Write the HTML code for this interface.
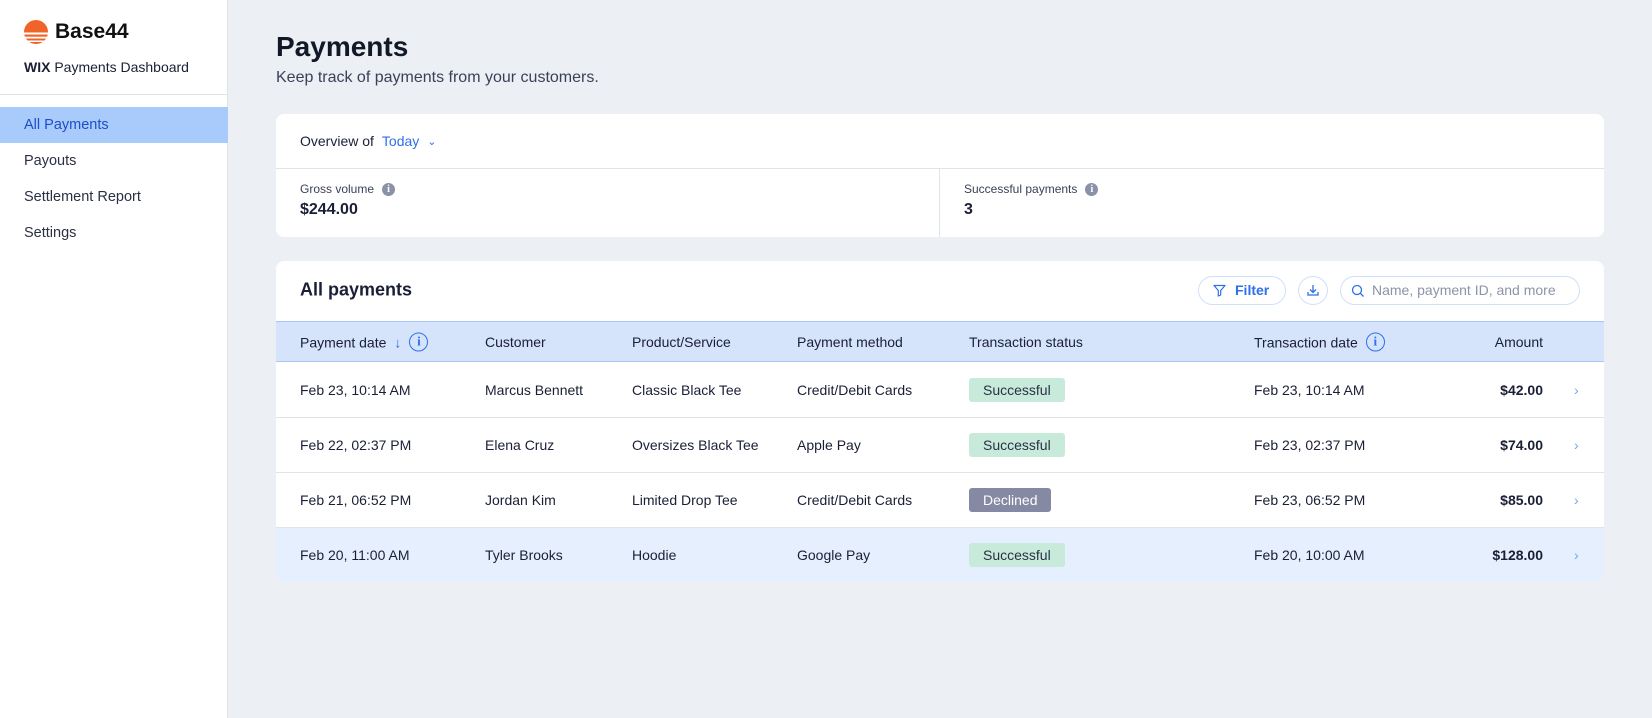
<!DOCTYPE html>
<html><head><style>
*{margin:0;padding:0;box-sizing:border-box}
body{width:1652px;height:718px;overflow:hidden;background:#eceff4;font-family:"Liberation Sans",sans-serif;color:#1a1f36;position:relative}
.side{position:absolute;left:0;top:0;width:228px;height:718px;background:#fff;border-right:1px solid #dfe3ea}
.abs{position:absolute}
.nav{position:absolute;left:0;width:228px;height:36px;line-height:36px;padding-left:24px;font-size:14.5px;color:#2b3044}
.card{position:absolute;background:#fff;border-radius:8px}
.t{position:absolute;font-size:14px;color:#1a1f36;white-space:nowrap;transform:translateY(-50%);display:flex;align-items:center}
.hd{background:#d5e4fb;border-top:1px solid #a9c6f5;border-bottom:1px solid #a9c6f5}
.badge{position:absolute;left:969px;height:24px;line-height:24px;border-radius:3px;font-size:14px;padding:0 14px;color:#2b3044;background:#c7eadb}
.info{display:inline-block;width:19px;height:19px;border:1.5px solid #2f6fe8;border-radius:50%;color:#2f6fe8;font-size:13px;font-weight:bold;text-align:center;line-height:16px;font-family:"Liberation Serif",serif;margin-left:8px}
.ginfo{display:inline-block;width:13px;height:13px;background:#8b91a8;border-radius:50%;color:#fff;font-size:10px;font-weight:bold;text-align:center;line-height:13px;font-family:"Liberation Serif",serif;margin-left:8px}
.row{position:absolute;left:276px;width:1328px;height:55px;border-top:1px solid #dfe3ea}
.chev{position:absolute;left:1574px;color:#7aa3ec;font-size:14px;transform:translateY(-50%)}
</style></head><body>
<div class="side">
 <svg class="abs" style="left:24px;top:20px" width="24" height="24" viewBox="0 0 24 24"><defs><clipPath id="c"><circle cx="12" cy="12" r="12"/></clipPath></defs><g clip-path="url(#c)" fill="#f0642a"><rect x="0" y="0" width="24" height="12.5"/><rect x="0" y="14.5" width="24" height="2.2"/><rect x="0" y="18.5" width="24" height="2"/><rect x="0" y="22" width="24" height="2"/></g></svg>
 <div class="abs" style="left:55px;top:20px;font-size:21px;font-weight:bold;color:#111">Base44</div>
 <div class="abs" style="left:24px;top:59px;font-size:14px;color:#1a1f36"><b style="font-weight:900">WIX</b> Payments Dashboard</div>
 <div class="abs" style="left:0;top:94px;width:228px;border-top:1px solid #dfe3ea"></div>
 <div class="nav" style="top:107px;background:#a9cbfc;color:#1d4fc4">All Payments</div>
 <div class="nav" style="top:143px">Payouts</div>
 <div class="nav" style="top:179px">Settlement Report</div>
 <div class="nav" style="top:215px">Settings</div>
</div>
<div class="abs" style="left:276px;top:31px;font-size:28px;font-weight:bold;color:#111827">Payments</div>
<div class="abs" style="left:276px;top:69px;font-size:16px;color:#3b4157">Keep track of payments from your customers.</div>

<div class="card" style="left:276px;top:114px;width:1328px;height:123px">
 <div class="t" style="left:24px;top:27px">Overview of <span style="color:#2f6fe8;margin-left:8px">Today</span><span style="color:#2f6fe8;font-size:11px;margin-left:8px">&#8964;</span></div>
 <div class="abs" style="left:0;top:54px;width:1328px;border-top:1px solid #dfe3ea"></div>
 <div class="abs" style="left:663px;top:54px;height:69px;border-left:1px solid #dfe3ea"></div>
 <div class="t" style="left:24px;top:75px;font-size:12px;color:#3b4157">Gross volume<span class="ginfo">i</span></div>
 <div class="t" style="left:24px;top:96px;font-size:16px;font-weight:bold">$244.00</div>
 <div class="t" style="left:688px;top:75px;font-size:12px;color:#3b4157">Successful payments<span class="ginfo">i</span></div>
 <div class="t" style="left:688px;top:96px;font-size:16px;font-weight:bold">3</div>
</div>

<div class="card" style="left:276px;top:261px;width:1328px;height:321px;overflow:hidden">
 <div class="t" style="left:24px;top:29px;font-size:18px;font-weight:bold">All payments</div>
 <div class="abs" style="left:922px;top:15px;width:88px;height:29px;border:1px solid #cfe0fb;border-radius:15px;color:#2f6fe8;font-size:14px;font-weight:bold;line-height:27px;padding-left:36px">Filter
  <svg class="abs" style="left:14px;top:7px" width="13" height="13" viewBox="0 0 13 13"><path d="M1 1.5h11L7.7 6.5V11L5.3 12V6.5Z" fill="none" stroke="#2f6fe8" stroke-width="1.2" stroke-linejoin="round"/></svg></div>
 <div class="abs" style="left:1022px;top:15px;width:30px;height:29px;border:1px solid #cfe0fb;border-radius:50%">
  <svg class="abs" style="left:7px;top:6px" width="14" height="14" viewBox="0 0 14 14"><path d="M7 2v7M4 6.5 7 9.5 10 6.5M2 9v3h10V9" fill="none" stroke="#2f6fe8" stroke-width="1.3"/></svg></div>
 <div class="abs" style="left:1064px;top:15px;width:240px;height:29px;border:1px solid #cfe0fb;border-radius:15px;font-size:14px;color:#8d93a8;line-height:27px;padding-left:31px">Name, payment ID, and more
  <svg class="abs" style="left:10px;top:7px" width="14" height="14" viewBox="0 0 14 14"><circle cx="6" cy="6" r="4.5" fill="none" stroke="#2f6fe8" stroke-width="1.3"/><path d="M9.3 9.3 12.5 12.5" stroke="#2f6fe8" stroke-width="1.3"/></svg></div>
</div>
<div class="abs hd" style="left:276px;top:321px;width:1328px;height:41px"></div>
<div class="t" style="left:300px;top:342px">Payment date <span style="color:#2f6fe8;margin-left:8px">&#8595;</span><span class="info">i</span></div>
<div class="t" style="left:485px;top:342px">Customer</div>
<div class="t" style="left:632px;top:342px">Product/Service</div>
<div class="t" style="left:797px;top:342px">Payment method</div>
<div class="t" style="left:969px;top:342px">Transaction status</div>
<div class="t" style="left:1254px;top:342px">Transaction date<span class="info">i</span></div>
<div class="t" style="left:1543px;top:342px;transform:translate(-100%,-50%)">Amount</div>

<div class="row" style="top:417px"></div>
<div class="row" style="top:472px"></div>
<div class="row" style="top:527px;background:#e6effd;border-radius:0 0 8px 8px"></div>

<div class="t" style="left:300px;top:390px">Feb 23, 10:14 AM</div><div class="t" style="left:485px;top:390px">Marcus Bennett</div><div class="t" style="left:632px;top:390px">Classic Black Tee</div><div class="t" style="left:797px;top:390px">Credit/Debit Cards</div><div class="badge" style="top:378px">Successful</div><div class="t" style="left:1254px;top:390px">Feb 23, 10:14 AM</div><div class="t" style="left:1543px;top:390px;transform:translate(-100%,-50%);font-weight:bold">$42.00</div><div class="chev" style="top:390px">&#8250;</div>

<div class="t" style="left:300px;top:445px">Feb 22, 02:37 PM</div><div class="t" style="left:485px;top:445px">Elena Cruz</div><div class="t" style="left:632px;top:445px">Oversizes Black Tee</div><div class="t" style="left:797px;top:445px">Apple Pay</div><div class="badge" style="top:433px">Successful</div><div class="t" style="left:1254px;top:445px">Feb 23, 02:37 PM</div><div class="t" style="left:1543px;top:445px;transform:translate(-100%,-50%);font-weight:bold">$74.00</div><div class="chev" style="top:445px">&#8250;</div>

<div class="t" style="left:300px;top:500px">Feb 21, 06:52 PM</div><div class="t" style="left:485px;top:500px">Jordan Kim</div><div class="t" style="left:632px;top:500px">Limited Drop Tee</div><div class="t" style="left:797px;top:500px">Credit/Debit Cards</div><div class="badge" style="top:488px;background:#8689a3;color:#fff">Declined</div><div class="t" style="left:1254px;top:500px">Feb 23, 06:52 PM</div><div class="t" style="left:1543px;top:500px;transform:translate(-100%,-50%);font-weight:bold">$85.00</div><div class="chev" style="top:500px">&#8250;</div>

<div class="t" style="left:300px;top:555px">Feb 20, 11:00 AM</div><div class="t" style="left:485px;top:555px">Tyler Brooks</div><div class="t" style="left:632px;top:555px">Hoodie</div><div class="t" style="left:797px;top:555px">Google Pay</div><div class="badge" style="top:543px">Successful</div><div class="t" style="left:1254px;top:555px">Feb 20, 10:00 AM</div><div class="t" style="left:1543px;top:555px;transform:translate(-100%,-50%);font-weight:bold">$128.00</div><div class="chev" style="top:555px">&#8250;</div>
</body></html>
